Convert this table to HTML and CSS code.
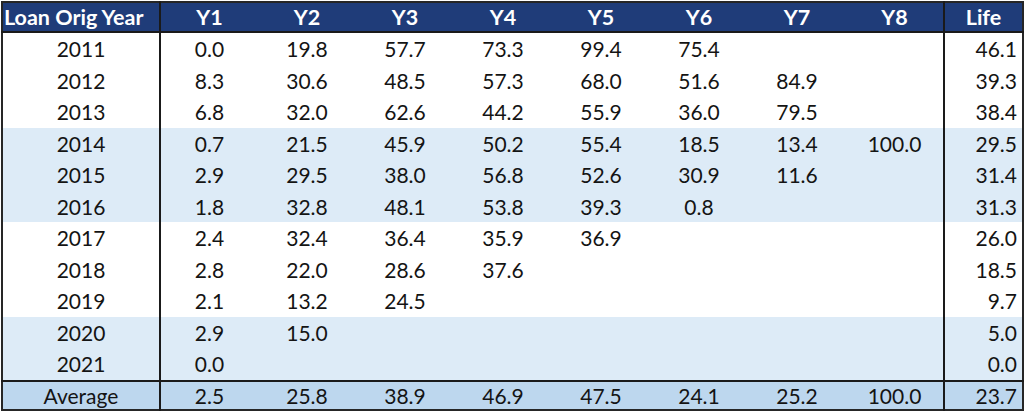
FILE: index.html
```html
<!DOCTYPE html>
<html>
<head>
<meta charset="utf-8">
<link rel="stylesheet" href="styles.css">
</head>
<body>
<table class="sheet">
  <colgroup>
    <col class="c-year"><col class="c-y"><col class="c-y"><col class="c-y"><col class="c-y"><col class="c-y"><col class="c-y"><col class="c-y"><col class="c-y"><col class="c-life">
  </colgroup>
  <thead>
    <tr><th class="first">Loan Orig Year</th><th>Y1</th><th>Y2</th><th>Y3</th><th>Y4</th><th>Y5</th><th>Y6</th><th>Y7</th><th>Y8</th><th class="life">Life</th></tr>
  </thead>
  <tbody>
    <tr><td class="first">2011</td><td>0.0</td><td>19.8</td><td>57.7</td><td>73.3</td><td>99.4</td><td>75.4</td><td></td><td></td><td class="life">46.1</td></tr>
    <tr><td class="first">2012</td><td>8.3</td><td>30.6</td><td>48.5</td><td>57.3</td><td>68.0</td><td>51.6</td><td>84.9</td><td></td><td class="life">39.3</td></tr>
    <tr><td class="first">2013</td><td>6.8</td><td>32.0</td><td>62.6</td><td>44.2</td><td>55.9</td><td>36.0</td><td>79.5</td><td></td><td class="life">38.4</td></tr>
    <tr class="band"><td class="first">2014</td><td>0.7</td><td>21.5</td><td>45.9</td><td>50.2</td><td>55.4</td><td>18.5</td><td>13.4</td><td>100.0</td><td class="life">29.5</td></tr>
    <tr class="band"><td class="first">2015</td><td>2.9</td><td>29.5</td><td>38.0</td><td>56.8</td><td>52.6</td><td>30.9</td><td>11.6</td><td></td><td class="life">31.4</td></tr>
    <tr class="band"><td class="first">2016</td><td>1.8</td><td>32.8</td><td>48.1</td><td>53.8</td><td>39.3</td><td>0.8</td><td></td><td></td><td class="life">31.3</td></tr>
    <tr><td class="first">2017</td><td>2.4</td><td>32.4</td><td>36.4</td><td>35.9</td><td>36.9</td><td></td><td></td><td></td><td class="life">26.0</td></tr>
    <tr><td class="first">2018</td><td>2.8</td><td>22.0</td><td>28.6</td><td>37.6</td><td></td><td></td><td></td><td></td><td class="life">18.5</td></tr>
    <tr><td class="first">2019</td><td>2.1</td><td>13.2</td><td>24.5</td><td></td><td></td><td></td><td></td><td></td><td class="life">9.7</td></tr>
    <tr class="band"><td class="first">2020</td><td>2.9</td><td>15.0</td><td></td><td></td><td></td><td></td><td></td><td></td><td class="life">5.0</td></tr>
    <tr class="band"><td class="first">2021</td><td>0.0</td><td></td><td></td><td></td><td></td><td></td><td></td><td></td><td class="life">0.0</td></tr>
  </tbody>
  <tfoot>
    <tr><td class="first">Average</td><td>2.5</td><td>25.8</td><td>38.9</td><td>46.9</td><td>47.5</td><td>24.1</td><td>25.2</td><td>100.0</td><td class="life">23.7</td></tr>
  </tfoot>
</table>
</body>
</html>
```
FILE: styles.css
```css
html, body {
  margin: 0;
  padding: 0;
  background: #ffffff;
}

body {
  padding: 1px;
}

.sheet {
  border-collapse: collapse;
  table-layout: fixed;
  width: 1021px;
  border: 2px solid #262626;
  font-family: Lato, "Open Sans", sans-serif;
  color: #141414;
}

.c-year { width: 158px; }
.c-y { width: 98px; }
.c-life { width: 79px; }

.sheet th,
.sheet td {
  padding: 0;
  text-align: center;
  white-space: nowrap;
}

.sheet thead th {
  background: #1f3c79;
  color: #ffffff;
  font-weight: 700;
  font-size: 21.5px;
  height: 28px;
  line-height: 28px;
  border-bottom: 2px solid #1a1a1a;
}

.sheet thead th.first {
  text-align: left;
  padding-left: 1px;
}

.sheet tbody td {
  font-size: 21px;
  height: 31.5px;
  line-height: 31px;
}

.sheet tbody tr.band td {
  background: #ddebf7;
}

.sheet tfoot td {
  background: #bdd7ee;
  font-size: 21px;
  height: 27px;
  line-height: 27px;
  border-top: 2px solid #1a1a1a;
}

.sheet .first {
  border-right: 2px solid #1a1a1a;
}

.sheet .life {
  border-left: 2px solid #1a1a1a;
}

.sheet td.life {
  text-align: right;
  padding-right: 5px;
}

.sheet th.life {
  text-align: center;
}
```
